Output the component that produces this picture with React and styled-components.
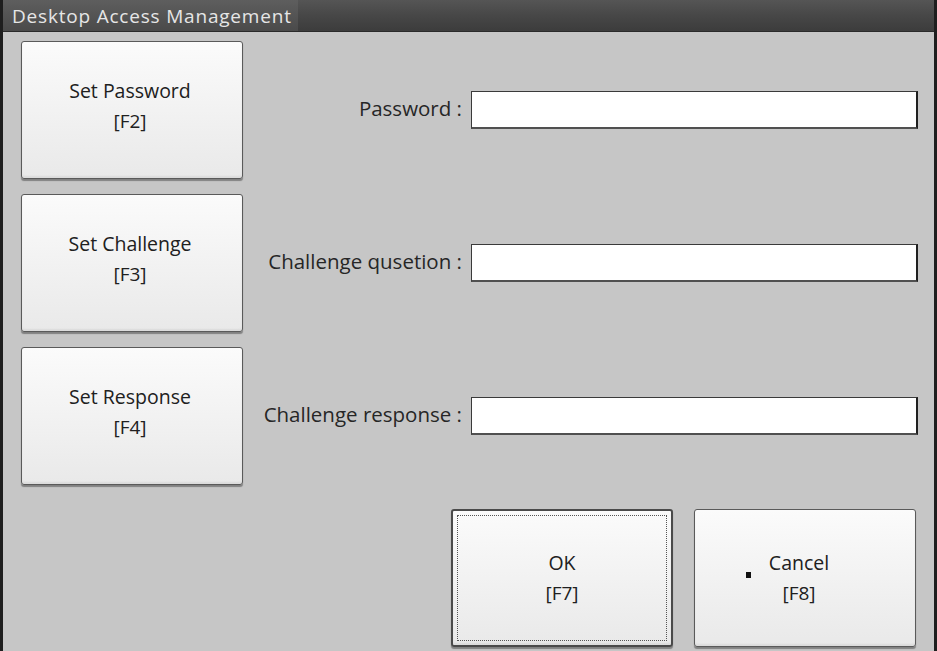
import React from "react";
import styled, { createGlobalStyle, css } from "styled-components";

const Global = createGlobalStyle`
  html, body { margin: 0; padding: 0; background: #c6c6c6; }
  body { font-family: "Open Sans", "Noto Sans", sans-serif; }
  * { box-sizing: border-box; }
`;

const Window = styled.div`
  width: 937px;
  height: 651px;
  display: flex;
  flex-direction: column;
  background: #c6c6c6;
  border-left: 3px solid #1e1e1e;
  border-right: 3px solid #1e1e1e;
  overflow: hidden;
`;

const TitleBar = styled.div`
  height: 32px;
  flex: none;
  display: flex;
  align-items: center;
  background: linear-gradient(to bottom, #555 0%, #474747 50%, #3c3c3c 100%);
  border-bottom: 1px solid #2a2a2a;
`;

const TitleText = styled.div`
  height: 100%;
  display: flex;
  align-items: center;
  padding: 0 6px 0 9px;
  background: linear-gradient(to bottom, #5e5e5e, #4a4a4a);
  color: #e6e6e6;
  font-size: 19px;
  letter-spacing: 0.8px;
`;

const Body = styled.div`
  flex: 1;
  display: flex;
  flex-direction: column;
  padding: 9px 16px 0 18px;
  gap: 21px;
`;

const Grid = styled.div`
  display: grid;
  grid-template-columns: 222px 1fr;
  grid-auto-rows: 138px;
  row-gap: 15px;
`;

const Button = styled.div`
  position: relative;
  width: 222px;
  height: 138px;
  display: flex;
  flex-direction: column;
  align-items: center;
  justify-content: center;
  border: 1px solid #5a5a5a;
  border-radius: 3px;
  background: linear-gradient(to bottom, #fbfbfb 0%, #f2f2f2 50%, #e9e9e9 100%);
  box-shadow: 0 2px 1px rgba(0, 0, 0, 0.35), inset 0 -2px 2px rgba(0, 0, 0, 0.06);
  color: #202020;
  font-size: 19.5px;
  line-height: 31px;
  padding-bottom: ${(p) => p.$shift || 0}px;
  padding-right: ${(p) => p.$shiftX || 0}px;
  ${(p) =>
    p.$focused &&
    css`
      border: 2px solid #4a4a4a;
      &::after {
        content: "";
        position: absolute;
        inset: 4px;
        border: 1px dotted #555;
      }
    `}
`;

const Key = styled.span`
  font-size: 19px;
`;

const Row = styled.div`
  display: flex;
  align-items: center;
`;

const Label = styled.div`
  flex: 1;
  text-align: right;
  padding-right: 9px;
  padding-bottom: 5px;
  font-size: 20.5px;
  color: #262626;
`;

const Input = styled.div`
  width: 447px;
  height: 38px;
  background: #fff;
  border: 1px solid #3a3a3a;
  border-right: 2px solid #202020;
  border-bottom: 2px solid #505050;
`;

const Footer = styled.div`
  display: flex;
  justify-content: flex-end;
  gap: 21px;
  padding-right: 2px;
  padding-top: 3px;
`;

const Dot = styled.span`
  position: absolute;
  left: 51px;
  top: 62px;
  width: 5px;
  height: 6px;
  background: #111;
`;

const rows = [
  { title: "Set Password", key: "[F2]", label: "Password :" },
  { title: "Set Challenge", key: "[F3]", label: "Challenge qusetion :" },
  { title: "Set Response", key: "[F4]", label: "Challenge response :" },
];

export default function App() {
  return (
    <>
      <Global />
      <Window>
        <TitleBar>
          <TitleText>Desktop Access Management</TitleText>
        </TitleBar>
        <Body>
          <Grid>
            {rows.map((r) => (
              <React.Fragment key={r.key}>
                <Button $shift={8} $shiftX={4}>
                  <span>{r.title}</span>
                  <Key>{r.key}</Key>
                </Button>
                <Row>
                  <Label>{r.label}</Label>
                  <Input />
                </Row>
              </React.Fragment>
            ))}
          </Grid>
          <Footer>
            <Button $focused $shift={0}>
              <span>OK</span>
              <Key>{"[F7]"}</Key>
            </Button>
            <Button $shift={-4} $shiftX={12}>
              <Dot />
              <span>Cancel</span>
              <Key>{"[F8]"}</Key>
            </Button>
          </Footer>
        </Body>
      </Window>
    </>
  );
}
